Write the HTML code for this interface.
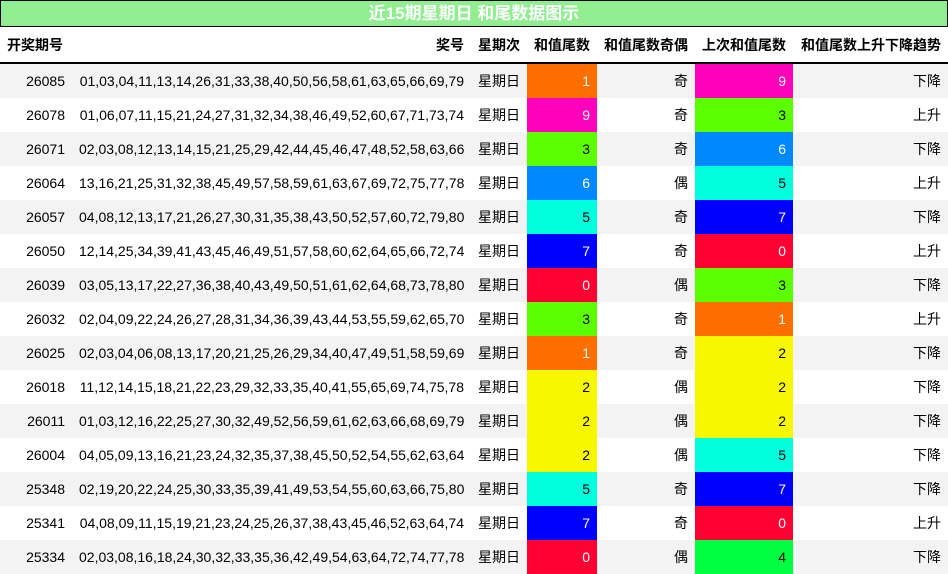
<!DOCTYPE html>
<html><head><meta charset="utf-8"><style>
body{margin:0;width:948px;height:574px;overflow:hidden;background:#fff;font-family:"Liberation Sans","Noto Sans CJK SC",sans-serif;font-size:14px;color:#000}
.t{position:absolute;left:0;top:0;width:946px;height:25px;background:#90ee90;border:1px solid #000;color:#fff;font-weight:bold;font-size:17px;text-align:center;line-height:26px}
table{position:absolute;left:0;top:27px;border-collapse:collapse;table-layout:fixed;width:948px}
td,th{padding:0 7px;white-space:nowrap;overflow:hidden}
th{height:35px;font-weight:bold;text-align:right;border-bottom:2px solid #000}
th:first-child{text-align:left}
td{height:34px;text-align:right}
tr:nth-child(even) td{background:#f3f3f3}
td.c{color:#fff}
td.k{color:#000}
</style></head><body>
<div class="t">近15期星期日 和尾数据图示</div>
<table>
<colgroup><col style="width:72px"><col style="width:399px"><col style="width:56px"><col style="width:70px"><col style="width:98px"><col style="width:98px"><col style="width:155px"></colgroup>
<tr><th>开奖期号</th><th>奖号</th><th>星期次</th><th>和值尾数</th><th>和值尾数奇偶</th><th>上次和值尾数</th><th>和值尾数上升下降趋势</th></tr>
<tr><td>26085</td><td>01,03,04,11,13,14,26,31,33,38,40,50,56,58,61,63,65,66,69,79</td><td>星期日</td><td class="c" style="background:#ff6f00">1</td><td>奇</td><td class="c" style="background:#ff00bb">9</td><td>下降</td></tr>
<tr><td>26078</td><td>01,06,07,11,15,21,24,27,31,32,34,38,46,49,52,60,67,71,73,74</td><td>星期日</td><td class="c" style="background:#ff00bb">9</td><td>奇</td><td class="k" style="background:#5cff00">3</td><td>上升</td></tr>
<tr><td>26071</td><td>02,03,08,12,13,14,15,21,25,29,42,44,45,46,47,48,52,58,63,66</td><td>星期日</td><td class="k" style="background:#5cff00">3</td><td>奇</td><td class="c" style="background:#0088ff">6</td><td>下降</td></tr>
<tr><td>26064</td><td>13,16,21,25,31,32,38,45,49,57,58,59,61,63,67,69,72,75,77,78</td><td>星期日</td><td class="c" style="background:#0088ff">6</td><td>偶</td><td class="k" style="background:#00ffdd">5</td><td>上升</td></tr>
<tr><td>26057</td><td>04,08,12,13,17,21,26,27,30,31,35,38,43,50,52,57,60,72,79,80</td><td>星期日</td><td class="k" style="background:#00ffdd">5</td><td>奇</td><td class="c" style="background:#0000ff">7</td><td>下降</td></tr>
<tr><td>26050</td><td>12,14,25,34,39,41,43,45,46,49,51,57,58,60,62,64,65,66,72,74</td><td>星期日</td><td class="c" style="background:#0000ff">7</td><td>奇</td><td class="c" style="background:#ff0033">0</td><td>上升</td></tr>
<tr><td>26039</td><td>03,05,13,17,22,27,36,38,40,43,49,50,51,61,62,64,68,73,78,80</td><td>星期日</td><td class="c" style="background:#ff0033">0</td><td>偶</td><td class="k" style="background:#5cff00">3</td><td>下降</td></tr>
<tr><td>26032</td><td>02,04,09,22,24,26,27,28,31,34,36,39,43,44,53,55,59,62,65,70</td><td>星期日</td><td class="k" style="background:#5cff00">3</td><td>奇</td><td class="c" style="background:#ff6f00">1</td><td>上升</td></tr>
<tr><td>26025</td><td>02,03,04,06,08,13,17,20,21,25,26,29,34,40,47,49,51,58,59,69</td><td>星期日</td><td class="c" style="background:#ff6f00">1</td><td>奇</td><td class="k" style="background:#f7f700">2</td><td>下降</td></tr>
<tr><td>26018</td><td>11,12,14,15,18,21,22,23,29,32,33,35,40,41,55,65,69,74,75,78</td><td>星期日</td><td class="k" style="background:#f7f700">2</td><td>偶</td><td class="k" style="background:#f7f700">2</td><td>下降</td></tr>
<tr><td>26011</td><td>01,03,12,16,22,25,27,30,32,49,52,56,59,61,62,63,66,68,69,79</td><td>星期日</td><td class="k" style="background:#f7f700">2</td><td>偶</td><td class="k" style="background:#f7f700">2</td><td>下降</td></tr>
<tr><td>26004</td><td>04,05,09,13,16,21,23,24,32,35,37,38,45,50,52,54,55,62,63,64</td><td>星期日</td><td class="k" style="background:#f7f700">2</td><td>偶</td><td class="k" style="background:#00ffdd">5</td><td>下降</td></tr>
<tr><td>25348</td><td>02,19,20,22,24,25,30,33,35,39,41,49,53,54,55,60,63,66,75,80</td><td>星期日</td><td class="k" style="background:#00ffdd">5</td><td>奇</td><td class="c" style="background:#0000ff">7</td><td>下降</td></tr>
<tr><td>25341</td><td>04,08,09,11,15,19,21,23,24,25,26,37,38,43,45,46,52,63,64,74</td><td>星期日</td><td class="c" style="background:#0000ff">7</td><td>奇</td><td class="c" style="background:#ff0033">0</td><td>上升</td></tr>
<tr><td>25334</td><td>02,03,08,16,18,24,30,32,33,35,36,42,49,54,63,64,72,74,77,78</td><td>星期日</td><td class="c" style="background:#ff0033">0</td><td>偶</td><td class="k" style="background:#00ff40">4</td><td>下降</td></tr>
</table>
</body></html>
